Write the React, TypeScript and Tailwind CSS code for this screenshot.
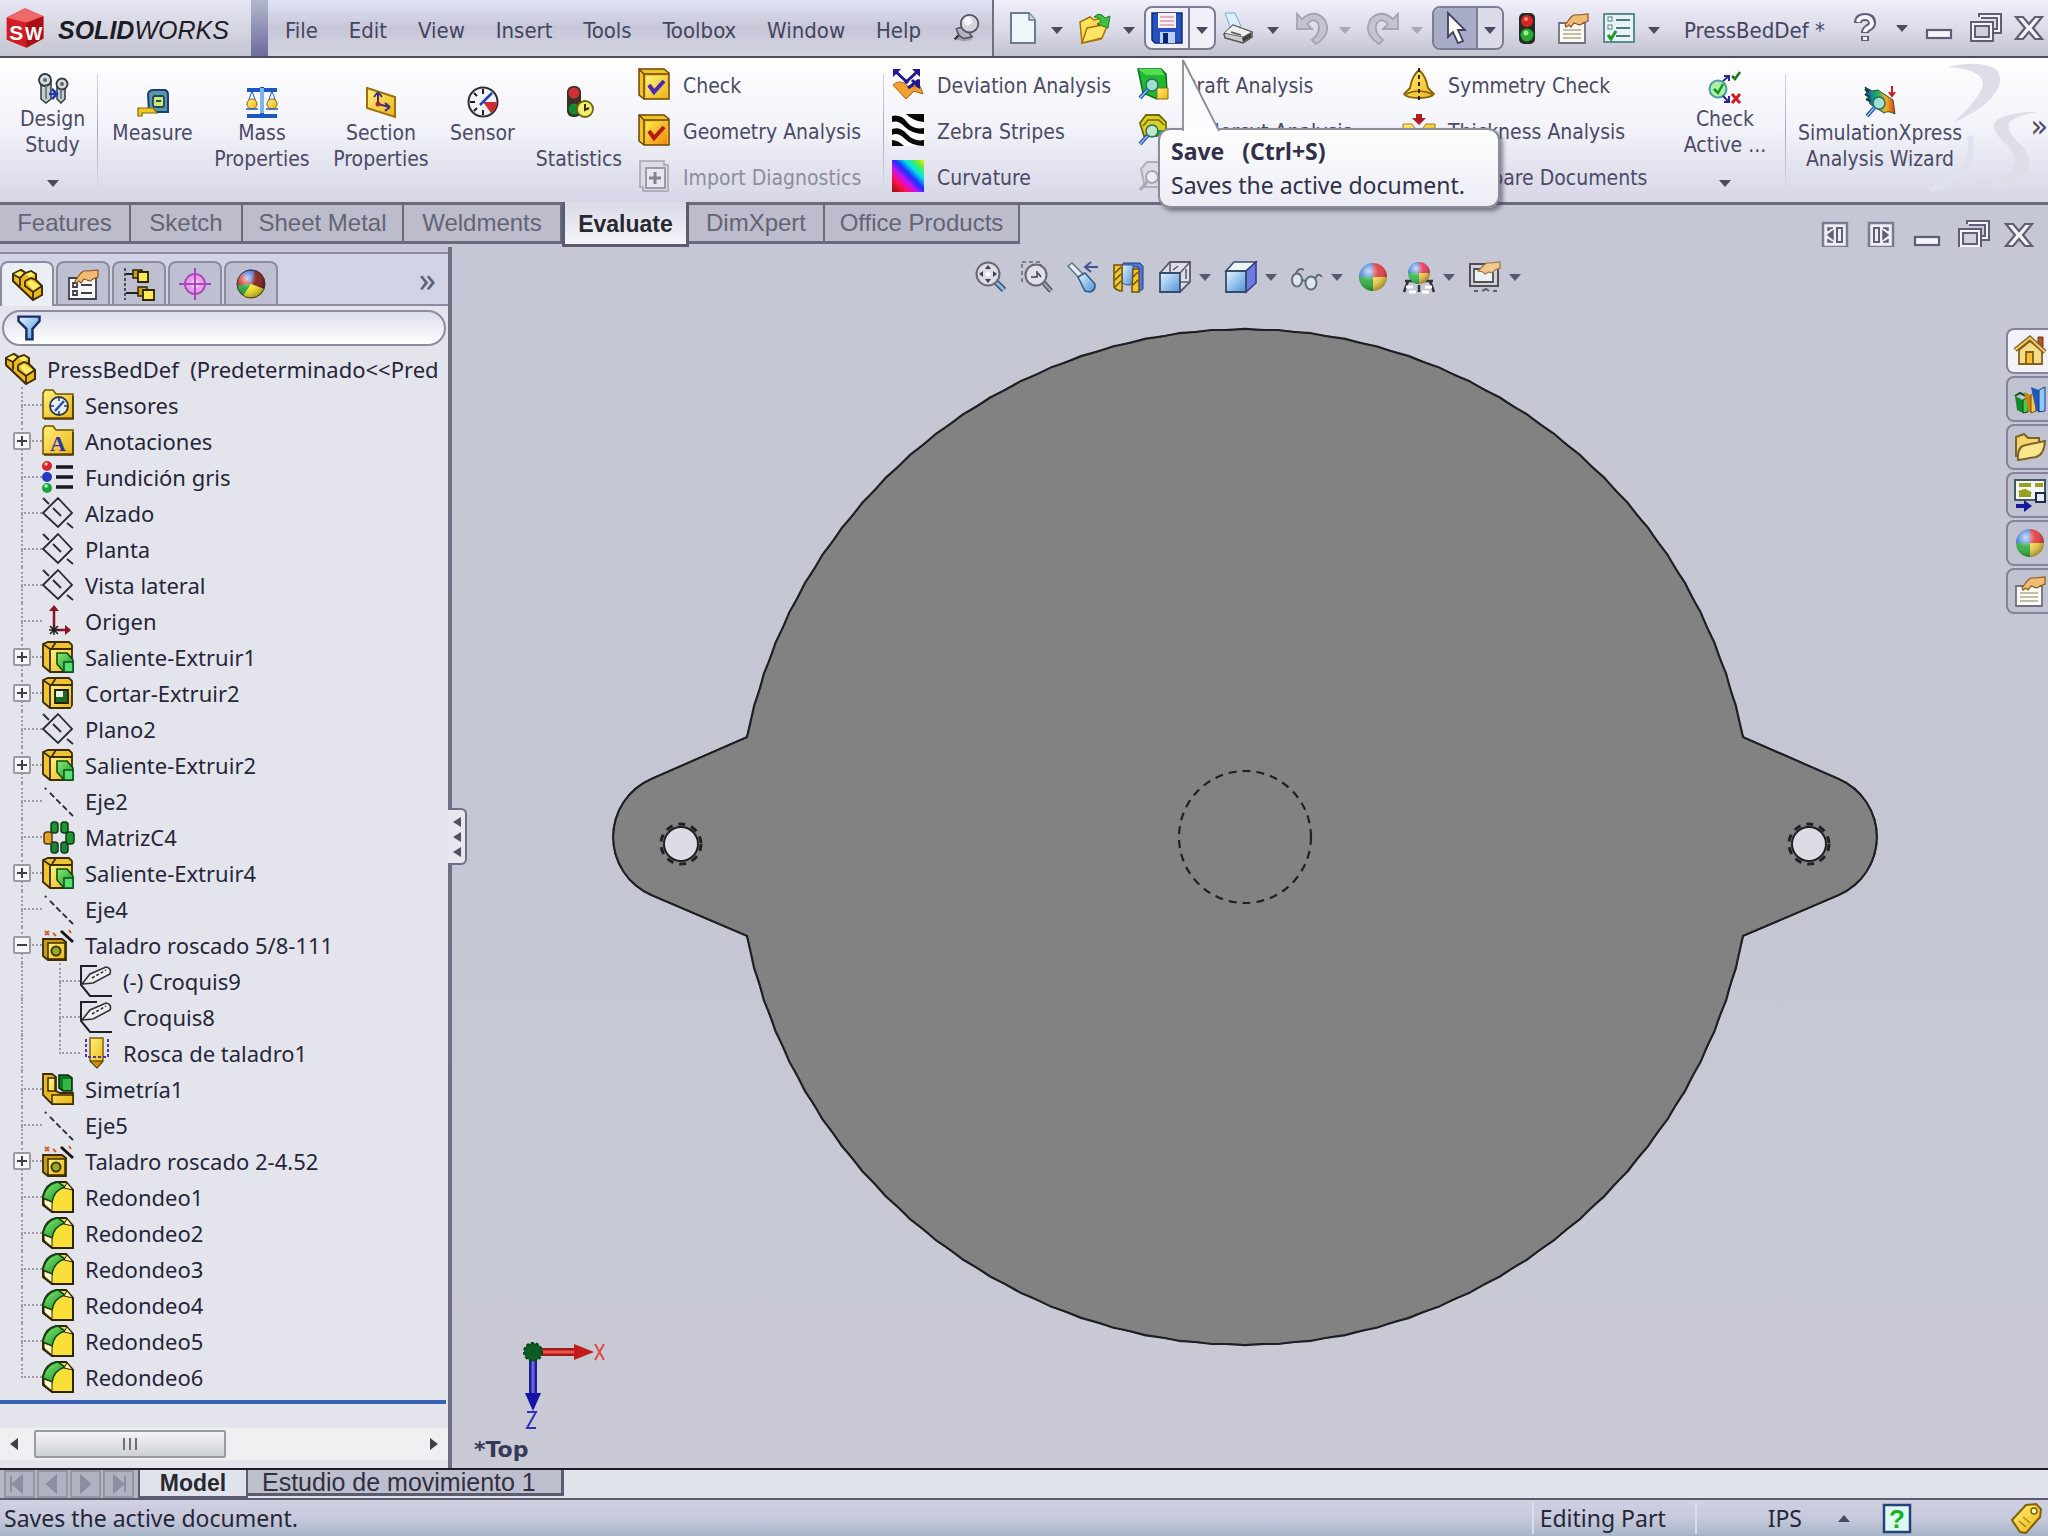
import type { ReactNode } from "react";
import clsx from "clsx";

function Defs() {
  return (
    <svg className="absolute size-0" aria-hidden="true">
      <defs>
        <linearGradient id="gold" x1="0" y1="0" x2="1" y2="1">
          <stop offset="0" stopColor="#fff27a" />
          <stop offset="1" stopColor="#ecb418" />
        </linearGradient>
        <linearGradient id="orange" x1="0" y1="0" x2="1" y2="1">
          <stop offset="0" stopColor="#ffe84a" />
          <stop offset="1" stopColor="#f08a10" />
        </linearGradient>
        <linearGradient id="sky" x1="0" y1="0" x2="1" y2="1">
          <stop offset="0" stopColor="#e6f4ff" />
          <stop offset="1" stopColor="#4c94dc" />
        </linearGradient>
        <linearGradient id="leaf" x1="0" y1="0" x2="1" y2="1">
          <stop offset="0" stopColor="#8aee70" />
          <stop offset="1" stopColor="#128a2a" />
        </linearGradient>
        <linearGradient id="rainbow" x1="1" y1="0" x2="0" y2="1">
          <stop offset="0" stopColor="#ffe600" />
          <stop offset="0.14" stopColor="#5cf03c" />
          <stop offset="0.3" stopColor="#00e6e6" />
          <stop offset="0.46" stopColor="#1a30ff" />
          <stop offset="0.62" stopColor="#d010f0" />
          <stop offset="0.78" stopColor="#ff1040" />
          <stop offset="1" stopColor="#8c1010" />
        </linearGradient>
        <linearGradient id="stress" x1="0" y1="0" x2="1" y2="0">
          <stop offset="0" stopColor="#1450c8" />
          <stop offset="0.4" stopColor="#18b060" />
          <stop offset="0.7" stopColor="#f0b020" />
          <stop offset="1" stopColor="#e04010" />
        </linearGradient>
        <radialGradient id="shine" cx="0.35" cy="0.3" r="0.7">
          <stop offset="0" stopColor="#fff" stopOpacity="0.75" />
          <stop offset="0.5" stopColor="#fff" stopOpacity="0.1" />
          <stop offset="1" stopColor="#000" stopOpacity="0.3" />
        </radialGradient>
      </defs>
    </svg>
  );
}

const ball = (
  <>
    <path d="M16 16V2A14 14 0 0 0 2 16Z" fill="#3c78d8" />
    <path d="M16 16V2A14 14 0 0 1 30 16Z" fill="#e03838" />
    <path d="M16 16H2A14 14 0 0 0 16 30Z" fill="#2cab3c" />
    <path d="M16 16H30A14 14 0 0 1 16 30Z" fill="#f2d24a" />
    <circle cx="16" cy="16" r="14" fill="url(#shine)" />
  </>
);

const hand = (
  <path
    d="M8 13 14 5Q17 2 21 3L31 2V9L26 11Q23 14 20 12L17 11 14 15 12 13 9 15Z"
    fill="#f0bc74"
    stroke="#8a5a20"
    strokeWidth="1.2"
  />
);

const lens = (
  <>
    <path d="M3 30 11 21" stroke="#204a9c" strokeWidth="4" />
    <path d="M3 30 11 21" stroke="#8cc8ff" strokeWidth="1.5" />
    <circle cx="15" cy="17" r="6" fill="#b8ecec" fillOpacity="0.8" stroke="#2a6a70" strokeWidth="1.5" />
  </>
);

const book = (
  <>
    <path d="M1 1H26L31 5V31H6L1 27Z" fill="#f0c428" stroke="#6e4200" strokeWidth="1.5" />
    <path d="M1 1 6 6H31M6 6V31" stroke="#6e4200" strokeWidth="1.5" fill="none" />
  </>
);

const block = (
  <>
    <path d="M1 3 6 1H27L30 4V28L28 31H8L1 25Z" fill="#f0c430" stroke="#3c2c00" strokeWidth="1.8" />
    <rect x="9" y="9" width="20" height="21" fill="url(#gold)" />
    <path d="M8 8H30M8 8V31M8 8 1 3M14 1 10 7" stroke="#3c2c00" strokeWidth="1.8" fill="none" />
  </>
);

const folder = (
  <>
    <path d="M1 4V29H31V5H14L11 1H3Z" fill="url(#gold)" stroke="#6e5200" strokeWidth="1.5" />
    <path d="M2 30H31V7" stroke="#4a3400" strokeWidth="1.5" fill="none" />
  </>
);

const restore = (
  <>
    <path d="M12 5V4H30V19H24" fill="none" stroke="#5e5e74" strokeWidth="6" />
    <path d="M12 5V4H30V19H24" fill="none" stroke="#f4f4fa" strokeWidth="2" />
    <rect x="4" y="12" width="18" height="15" fill="#d0d0dc" stroke="#5e5e74" strokeWidth="6" />
    <rect x="4" y="12" width="18" height="15" fill="none" stroke="#f4f4fa" strokeWidth="2" />
  </>
);

const icons: Record<string, ReactNode> = {
  logo: (
    <>
      <path d="M2 8 16 1 30 7V24L17 31 2 25Z" fill="#d01c22" />
      <path d="M2 8 16 1 30 7 17 12Z" fill="#f0686a" />
      <path d="M17 12V31L30 24V7Z" fill="#a81018" />
      <text x="4" y="25" fontSize="16" fontWeight="700" fontFamily="Liberation Sans" fill="#fff">S</text>
      <text x="16" y="25" fontSize="14" fontWeight="700" fontFamily="Liberation Sans" fill="#fff">W</text>
    </>
  ),
  pin: (
    <>
      <ellipse cx="14" cy="28" rx="9" ry="3" fill="#a0a0ac" />
      <path d="M3 29 12 20" stroke="#303040" strokeWidth="2.5" />
      <path d="M5 17Q14 12 23 26L14 28Q7 26 5 17Z" fill="#b4b4c0" stroke="#50505e" strokeWidth="1.8" />
      <circle cx="20" cy="11" r="10" fill="#d4d4de" stroke="#50505e" strokeWidth="2" />
      <circle cx="18" cy="8" r="5" fill="#f6f6fa" />
    </>
  ),
  new: (
    <>
      <path d="M4 1H22L28 8V31H4Z" fill="#eef6fa" stroke="#6c7c8c" strokeWidth="2" />
      <path d="M22 1V8H28" fill="#c8d4e0" stroke="#6c7c8c" strokeWidth="1.5" />
    </>
  ),
  open: (
    <>
      <path d="M1 10 11 5 15 8 24 6V14L27 15 22 27 3 31Z" fill="url(#gold)" stroke="#a87008" strokeWidth="1.5" />
      <path d="M3 31 8 16 29 12 23 26Z" fill="#ffe468" stroke="#a87008" strokeWidth="1.5" />
      <path d="M15 5Q21-1 26 6L31 4 29 16 18 12 22 10Q20 5 15 5Z" fill="#40c040" stroke="#1a7a24" />
    </>
  ),
  save: (
    <>
      <path d="M1 1H31V31H4L1 28Z" fill="#2450c0" stroke="#102878" strokeWidth="1.5" />
      <rect x="7" y="1" width="18" height="15" fill="#f4f2f8" />
      <path d="M9 5H23M9 9H23M9 13H23" stroke="#dc9ca8" strokeWidth="1.5" />
      <rect x="9" y="20" width="15" height="11" fill="#b8d0ec" />
      <rect x="12" y="21" width="5" height="10" fill="#0c2470" />
    </>
  ),
  print: (
    <>
      <path d="M2 1H12L18 14 8 17Z" fill="#dceefc" stroke="#88a4c0" />
      <path d="M1 22 10 13 29 20V25L20 31 2 26Z" fill="#c8ccca" stroke="#505450" strokeWidth="1.5" />
      <path d="M1 21 10 13 29 20 20 25Z" fill="#eef0ee" stroke="#606460" />
      <path d="M19 26 28 21V25L20 30Z" fill="#3c403c" />
      <path d="M8 20 18 23" stroke="#505450" strokeWidth="1.5" />
    </>
  ),
  undo: (
    <path d="M2 2V17H17L12 12Q18 5 23 11 27 20 17 28L21 32Q37 22 30 8 20-4 7 7Z" fill="#c4c4d0" stroke="#a4a4b2" strokeWidth="1.8" />
  ),
  redo: (
    <path d="M31 2V17H16L21 12Q15 5 10 11 6 20 16 28L12 32Q-4 22 3 8 13-4 26 7Z" fill="#c4c4d0" stroke="#a4a4b2" strokeWidth="1.8" />
  ),
  cursor: (
    <path d="M9 1V25L14 20 19 31 24 29 19 18H26Z" fill="#fff" stroke="#404058" strokeWidth="1.8" />
  ),
  traffic: (
    <>
      <rect x="8" y="1" width="16" height="31" rx="5" fill="#222c20" />
      <circle cx="16" cy="9" r="6" fill="#d82424" />
      <circle cx="16" cy="23" r="6.5" fill="#28a830" />
      <circle cx="15" cy="21" r="2.5" fill="#a0f088" />
      <circle cx="15" cy="7" r="2" fill="#ff8c80" />
    </>
  ),
  props: (
    <>
      <path d="M2 11H28V31H2Z" fill="#fbfaf4" stroke="#707080" strokeWidth="1.8" />
      <path d="M6 18H24M6 22H24M6 26H24" stroke="#b0a890" strokeWidth="1.5" />
      {hand}
    </>
  ),
  options: (
    <>
      <rect x="1" y="2" width="30" height="28" fill="#e8f4f4" stroke="#5c8c90" strokeWidth="2" />
      <path d="M13 8H27M13 16H27M13 24H27" stroke="#4c7c80" strokeWidth="2" />
      <rect x="5" y="5" width="4" height="4" fill="#fff" stroke="#4c7c80" />
      <rect x="5" y="13" width="4" height="4" fill="#fff" stroke="#4c7c80" />
      <path d="M5 23 8 27 13 19" stroke="#20982c" strokeWidth="3" fill="none" />
    </>
  ),
  help: (
    <>
      <path d="M9 11Q9 5 16 5T23 11Q23 14 19 16 16 18 16 21M16 24V29" fill="none" stroke="#5e5e74" strokeWidth="8" />
      <path d="M9 10Q10 5 16 5T23 11Q23 14 19 16 16 18 16 20M16 25V28" fill="none" stroke="#f4f4fa" strokeWidth="4" />
    </>
  ),
  min: <rect x="4" y="18" width="24" height="8" fill="#f4f4fa" stroke="#5e5e74" strokeWidth="2.2" />,
  restore,
  close: (
    <path d="M3 5H10L16 12 22 5H29L20 16 29 27H22L16 20 10 27H3L12 16Z" fill="#f4f4fa" stroke="#5e5e74" strokeWidth="2.2" />
  ),
  tileLeft: (
    <>
      <rect x="4" y="4" width="24" height="24" fill="#eeeef6" stroke="#7c7c90" strokeWidth="2.5" />
      <path d="M14 9H9V12M9 20V23H14M14 12V20L9 16Z" fill="#606074" stroke="#606074" strokeWidth="1.5" />
      <rect x="18" y="9" width="5" height="14" fill="none" stroke="#606074" strokeWidth="2" />
    </>
  ),
  tileRight: (
    <>
      <rect x="4" y="4" width="24" height="24" fill="#eeeef6" stroke="#7c7c90" strokeWidth="2.5" />
      <path d="M18 9H23V12M23 20V23H18M18 12V20L23 16Z" fill="#606074" stroke="#606074" strokeWidth="1.5" />
      <rect x="9" y="9" width="5" height="14" fill="none" stroke="#606074" strokeWidth="2" />
    </>
  ),
  study: (
    <>
      <path d="M4 9H14V27L9 31 4 27Z" fill="#c4ccd0" stroke="#303840" strokeWidth="1.5" />
      <circle cx="8" cy="8" r="6" fill="#d4dce0" stroke="#303840" strokeWidth="1.8" />
      <path d="M20 15H28V27L24 31 20 27Z" fill="#c4ccd0" stroke="#303840" strokeWidth="1.5" />
      <circle cx="25" cy="12" r="5.5" fill="#d4dce0" stroke="#303840" strokeWidth="1.8" />
      <path d="M9 12V27M24 16V27" stroke="#606870" strokeWidth="1.5" />
      <circle cx="8" cy="8" r="2" fill="#606870" />
      <circle cx="25" cy="12" r="2" fill="#606870" />
      <path d="M12 22H19M15 17 20 22 15 27" stroke="#2438b0" strokeWidth="2.5" fill="none" />
    </>
  ),
  measure: (
    <>
      <path d="M11 8Q12 4 16 4H28Q31 5 31 9V26H12Z" fill="#5c98a4" stroke="#1c3c80" strokeWidth="2" />
      <rect x="16" y="10" width="11" height="11" rx="2" fill="#d0e870" stroke="#1c4868" strokeWidth="1.8" />
      <path d="M19 15H24" stroke="#1c4868" strokeWidth="2" />
      <path d="M1 22H16L20 27H5V30H1Z" fill="#f0c820" stroke="#886808" strokeWidth="1.2" />
    </>
  ),
  mass: (
    <>
      <path d="M1 4H31M16 1V28" stroke="#1c58c0" strokeWidth="4" />
      <path d="M1 30H31" stroke="#1c58c0" strokeWidth="4" />
      <path d="M14 2H18V27H14Z" fill="#80b4f0" />
      <path d="M6 5 1 19M6 5 11 19M26 5 21 19M26 5 31 19" stroke="#1c58c0" />
      <circle cx="6" cy="18" r="5" fill="url(#gold)" stroke="#987010" />
      <circle cx="26" cy="18" r="5" fill="url(#gold)" stroke="#987010" />
      <path d="M0 23H12M20 23H32" stroke="#1c58c0" strokeWidth="1.5" />
    </>
  ),
  section: (
    <>
      <path d="M2 2 30 11V31L2 22Z" fill="url(#gold)" stroke="#a07008" strokeWidth="2" />
      <path d="M13 7V18L24 21M13 6 9 11M13 6 17 11M25 21 20 17M25 21 20 25" stroke="#40307c" strokeWidth="2" fill="none" />
      <circle cx="13" cy="18" r="2.5" fill="#b02040" />
    </>
  ),
  sensor: (
    <>
      <circle cx="16" cy="16" r="14.5" fill="#f2f4f8" stroke="#303034" strokeWidth="2" />
      <path d="M16 16 30 16Q30 23 24 27Z" fill="#d02c34" />
      <path d="M16 3V8M3 16H8M7 7 10 10M7 25 10 22M16 29V24" stroke="#202024" strokeWidth="2" />
      <path d="M13 19 25 7" stroke="#2040c0" strokeWidth="2.5" />
    </>
  ),
  stats: (
    <>
      <rect x="4" y="0" width="14" height="31" rx="6" fill="#3a3024" />
      <circle cx="11" cy="7" r="5.5" fill="#cc3030" />
      <circle cx="11" cy="23" r="5.5" fill="#188830" />
      <circle cx="22" cy="23" r="8" fill="#f6ee70" stroke="#6c6410" strokeWidth="1.8" />
      <path d="M22 18V24L26 22" stroke="#303010" strokeWidth="2" fill="none" />
    </>
  ),
  check: (
    <>
      {book}
      <rect x="8" y="8" width="21" height="22" fill="url(#gold)" />
      <path d="M11 17 16 24 26 13" stroke="#4a28b4" strokeWidth="4" fill="none" />
    </>
  ),
  geometry: (
    <>
      {book}
      <rect x="8" y="8" width="21" height="22" fill="url(#orange)" />
      <path d="M11 17 16 24 26 13" stroke="#b01c10" strokeWidth="4" fill="none" />
    </>
  ),
  import: (
    <>
      <path d="M2 1H26V5H30V31H5V27H2Z" fill="#dcdce6" stroke="#a4a4b0" strokeWidth="1.5" />
      <rect x="8" y="8" width="19" height="20" fill="#e8e8f0" stroke="#9494a0" strokeWidth="1.8" />
      <path d="M17 12V24M11 18H23" stroke="#84848f" strokeWidth="3" />
    </>
  ),
  deviation: (
    <>
      <path d="M1 17Q6 12 12 15L17 19 28 18 31 26 22 23 14 31Z" fill="#f0a030" stroke="#b06010" />
      <path d="M3 3 16 15M26 3 13 15M20 12 27 19M27 12 16 20" stroke="#201890" strokeWidth="3" />
      <path d="M1 1H9L1 9ZM28 1H20L28 9ZM28 11V21L21 16Z" fill="#201890" />
    </>
  ),
  zebra: (
    <>
      <rect width="32" height="32" fill="#fff" />
      <path d="M0 2Q9 0 15 8T32 14V20Q20 20 13 13T0 8ZM0 15Q8 12 15 20T32 26V32Q20 32 13 25T0 21ZM14 0Q21 7 32 8V0ZM0 26Q6 26 12 32H0Z" fill="#080808" />
    </>
  ),
  curvature: <rect width="32" height="32" fill="url(#rainbow)" />,
  draft: (
    <>
      <path d="M1 1H24L29 6 30 24 20 31 6 25Z" fill="#20b830" stroke="#08701c" strokeWidth="1.5" />
      <path d="M1 1 9 7H27L24 1Z" fill="#50e050" />
      <path d="M20 20H31V31H20Z" fill="url(#gold)" stroke="#907008" />
      {lens}
    </>
  ),
  undercut: (
    <>
      <path d="M3 9 9 1H22L29 8V16L20 22H7Z" fill="#dcd020" stroke="#706808" strokeWidth="1.8" />
      <path d="M6 12 11 6H22L27 11" stroke="#706808" strokeWidth="1.5" fill="none" />
      <path d="M18 16H31V19L20 22Z" fill="#28a030" />
      {lens}
    </>
  ),
  parting: (
    <>
      <path d="M4 9 10 2H22L28 9V20L22 27H8Z" fill="#dcdce4" stroke="#b0b0bc" strokeWidth="2" />
      <path d="M3 30 11 21" stroke="#a8a8b4" strokeWidth="3" />
      <circle cx="15" cy="17" r="6" fill="#ececf2" stroke="#a8a8b4" strokeWidth="2" />
    </>
  ),
  symmetry: (
    <>
      <path d="M16 2Q23 8 25 20L31 26Q28 30 16 30T1 26L7 20Q9 8 16 2Z" fill="url(#gold)" stroke="#806008" strokeWidth="1.8" />
      <path d="M3 26Q16 20 29 26" stroke="#806008" strokeWidth="1.5" fill="none" />
      <path d="M16 0V32" stroke="#302404" strokeWidth="2" strokeDasharray="4 3" />
    </>
  ),
  thickness: (
    <>
      <path d="M0 10H9Q12 16 16 16T23 10H32V16H24Q20 21 16 21T8 16H0Z" fill="url(#gold)" stroke="#b07810" />
      <path d="M13 0H19V4H23L16 11 9 4H13ZM13 32H19V28H23L16 22 9 28H13Z" fill="#b01c24" />
    </>
  ),
  compare: (
    <>
      <path d="M2 2H15V22H2Z" fill="#fff" stroke="#606078" strokeWidth="1.5" />
      <path d="M16 10H30V30H16Z" fill="#fff" stroke="#606078" strokeWidth="1.5" />
    </>
  ),
  checkActive: (
    <>
      <circle cx="9" cy="17" r="8.5" fill="#b0f0a0" stroke="#4c9cac" strokeWidth="2" />
      <path d="M5 17 9 21 14 12" stroke="#109830" strokeWidth="2.5" fill="none" />
      <path d="M14 9 20 4M15 4H20V9M14 24 20 30M20 24V30H15" stroke="#282890" strokeWidth="2" fill="none" />
      <path d="M23 4 26 7 31 0" stroke="#187820" strokeWidth="2.5" fill="none" />
      <path d="M23 22 31 31M31 22 23 31" stroke="#d01c24" strokeWidth="3" />
    </>
  ),
  simulation: (
    <>
      <path d="M1 1 8 5 14 4 29 14 31 28Q24 24 20 27L6 18Z" fill="url(#stress)" stroke="#30502c" />
      <path d="M1 3 5 6M1 8 6 11M2 13 7 15" stroke="#104048" strokeWidth="2.5" />
      <path d="M28 0V9M25 6 28 10 31 6" stroke="#c02020" strokeWidth="2" fill="none" />
      {lens}
    </>
  ),
  zoomFit: (
    <>
      <path d="M21 21 29 29" stroke="#384c68" strokeWidth="6" />
      <path d="M21 21 29 29" stroke="#88b8e8" strokeWidth="3" />
      <circle cx="13" cy="13" r="11.5" fill="#dcdce4" stroke="#686874" strokeWidth="2" />
      <path d="M13 4 16 8H10ZM13 22 16 18H10ZM4 13 8 10V16ZM22 13 18 10V16Z" fill="#404050" />
      <circle cx="13" cy="13" r="2.5" fill="#fff" />
    </>
  ),
  zoomArea: (
    <>
      <path d="M1 1H20V20H1Z" fill="none" stroke="#686874" strokeWidth="1.5" strokeDasharray="4 3" />
      <path d="M23 22 30 30" stroke="#585864" strokeWidth="5" />
      <path d="M23 22 30 30" stroke="#a4a4b0" strokeWidth="2" />
      <circle cx="15" cy="14" r="10.5" fill="#e0e0e8" stroke="#686874" strokeWidth="2" />
      <path d="M10 16H16V10M17 12 20 16" stroke="#404050" strokeWidth="1.5" fill="none" />
    </>
  ),
  previous: (
    <>
      <path d="M1 5 5 2 17 14 13 18Z" fill="#e4eef4" stroke="#607888" strokeWidth="1.5" />
      <path d="M11 16 18 12 28 23Q29 29 23 31L18 30Z" fill="url(#sky)" stroke="#305880" strokeWidth="1.5" />
      <path d="M31 6H19M24 1 18 6 24 11" stroke="#405890" strokeWidth="2" fill="none" />
    </>
  ),
  sectionView: (
    <>
      <path d="M10 2H27L30 5V28L25 31V6H10Z" fill="#4878d8" stroke="#283c80" />
      <path d="M9 4H20V22Q16 26 9 22Z" fill="url(#sky)" stroke="#305890" />
      <path d="M1 4H9V30Q4 30 1 26ZM20 8H26V31H19V26Z" fill="#f0c830" stroke="#705008" strokeWidth="1.5" />
      <path d="M2 12 8 6M2 19 8 13M2 26 8 20M20 16 25 11M20 24 25 19" stroke="#705008" strokeWidth="1.5" />
    </>
  ),
  orient: (
    <>
      <path d="M1 12 11 1H31V21L21 31" fill="#e0dce8" stroke="#585868" strokeWidth="1.8" />
      <path d="M11 1V12M21 12 31 1M31 21H21M14 9 19 5M27 8V18" stroke="#585868" strokeWidth="1.5" />
      <path d="M1 12H21V31H1Z" fill="url(#sky)" stroke="#384c68" strokeWidth="1.8" />
    </>
  ),
  display: (
    <>
      <path d="M1 10 9 1H31L21 10Z" fill="#eef6fc" stroke="#384c68" strokeWidth="1.5" />
      <path d="M21 10 31 1V22L21 31Z" fill="#6c7cdc" stroke="#30389c" strokeWidth="1.5" />
      <path d="M1 10H21V31H1Z" fill="url(#sky)" stroke="#384c68" strokeWidth="1.8" />
    </>
  ),
  glasses: (
    <>
      <path d="M4 17Q6 5 13 9M23 20Q27 10 31 16" stroke="#606c78" strokeWidth="2" fill="none" />
      <ellipse cx="6" cy="19" rx="5" ry="6.5" fill="#dce8ec" stroke="#606c78" strokeWidth="2" />
      <ellipse cx="20" cy="22" rx="5.5" ry="6.5" fill="#dce8ec" stroke="#606c78" strokeWidth="2" />
      <path d="M11 19 15 20" stroke="#606c78" strokeWidth="2" />
    </>
  ),
  ball,
  scene: (
    <>
      <path d="M2 20H30M5 20 1 31M27 20 31 31M16 24V31" stroke="#303038" strokeWidth="2.5" />
      <path d="M3 26H10M22 26H29M6 31H13M19 31H26" stroke="#fff" strokeWidth="3" />
      <path d="M16 12V1A11 11 0 0 0 5 12Z" fill="#3c78d8" />
      <path d="M16 12V1A11 11 0 0 1 27 12Z" fill="#e03858" />
      <path d="M16 12H5A11 11 0 0 0 16 23Z" fill="#2cbb4c" />
      <path d="M16 12H27A11 11 0 0 1 16 23Z" fill="#f2c24a" />
      <circle cx="16" cy="12" r="11" fill="url(#shine)" />
    </>
  ),
  monitor: (
    <>
      <path d="M1 3H29V25H1Z" fill="#d4d4d8" stroke="#505058" strokeWidth="2" />
      <path d="M5 8H24V21H5Z" fill="#eef2f2" stroke="#505058" strokeWidth="1.8" />
      <path d="M5 30H9M13 30 17 28 20 30M24 30H28" stroke="#606068" strokeWidth="2" fill="none" />
      <path d="M9 10 15 4Q18 1 22 2L31 1V7L26 9Q23 13 20 11L16 13 14 11Z" fill="#f0c890" stroke="#9a7440" strokeWidth="1.2" />
    </>
  ),
  home: (
    <>
      <path d="M24 2H29V12H24Z" fill="#b05828" stroke="#703010" />
      <path d="M5 15 16 6 28 16V29H5Z" fill="#f6dc88" stroke="#806020" strokeWidth="1.8" />
      <path d="M1 15 16 3 31 17" stroke="#806020" strokeWidth="4.5" fill="none" />
      <path d="M1 15 16 3 31 17" stroke="#f4cc60" strokeWidth="2" fill="none" />
      <path d="M12 17H19V29H12Z" fill="#f8c030" stroke="#806020" strokeWidth="1.8" />
    </>
  ),
  books: (
    <>
      <path d="M1 13 9 17V30L3 27Z" fill="#108a28" />
      <path d="M9 17 14 14V29L9 30Z" fill="#40d050" stroke="#084c14" />
      <path d="M1 13 6 10 14 14" stroke="#0c5818" strokeWidth="2" fill="none" />
      <path d="M10 9 17 12V30L14 28Z" fill="#c88410" />
      <path d="M17 12 22 9V28L17 30Z" fill="#f6cc40" stroke="#785008" />
      <path d="M17 4 25 7V29L22 28Z" fill="#2458c0" />
      <path d="M25 7 31 4V28L25 29Z" fill="#90c8f8" stroke="#183c88" />
    </>
  ),
  openFolder: (
    <>
      <path d="M2 26V6L10 3 14 7H25V13" fill="#f4d46c" stroke="#7c6428" strokeWidth="2" />
      <path d="M4 29Q3 15 12 14L31 10Q30 24 22 26L5 29Z" fill="#fae68c" stroke="#7c6428" strokeWidth="2" />
    </>
  ),
  palette: (
    <>
      <rect x="1" y="1" width="30" height="20" fill="#f4f8f8" stroke="#405868" strokeWidth="2" />
      <path d="M5 6H17M21 6H29M5 14 11 12 17 15M5 16H17" stroke="#98a020" strokeWidth="4" />
      <path d="M22 14H31V23H22Z" fill="#e8ecf4" stroke="#202850" strokeWidth="2" />
      <path d="M2 27H12" stroke="#1818a0" strokeWidth="4" />
      <path d="M10 21 18 27 10 33Z" fill="#1818a0" />
    </>
  ),
  part: (
    <>
      <path d="M2 5 10 1 15 4 20 2 25 5V11L31 17V26L22 31 2 12Z" fill="#ecb81c" stroke="#3c2c00" strokeWidth="2" />
      <path d="M3 5 9 2 14 5 9 8ZM15 5 20 3 24 6 19 9ZM16 14 20 11 29 17 22 21Z" fill="#fff06c" />
      <path d="M3 6 9 9 14 4M9 9V17M14 12 20 9 25 11M14 12V17L22 23 31 17M22 23V30" stroke="#3c2c00" strokeWidth="1.8" fill="none" />
    </>
  ),
  manager: (
    <>
      <path d="M2 10H29V31H2Z" fill="#f8f8f8" stroke="#404048" strokeWidth="1.8" />
      <path d="M6 15H10V19H6ZM6 23H10V27H6ZM14 17H25M14 25H25" stroke="#404048" strokeWidth="1.8" fill="none" />
      {hand}
    </>
  ),
  config: (
    <>
      <path d="M2 0V32" stroke="#404048" strokeWidth="1.8" strokeDasharray="3 2" />
      <path d="M3 6H14M3 25H18" stroke="#202020" strokeWidth="2" />
      <path d="M10 2H19V10H10Z" fill="#c8a018" stroke="#302400" strokeWidth="1.5" />
      <path d="M15 4H25V14H15Z" fill="#ffec50" stroke="#302400" strokeWidth="1.8" />
      <path d="M15 19H24V28H15Z" fill="#c8a018" stroke="#302400" strokeWidth="1.5" />
      <path d="M20 22H31V32H20Z" fill="#ffec50" stroke="#302400" strokeWidth="1.8" />
    </>
  ),
  target: (
    <>
      <circle cx="16" cy="16" r="10" fill="#e8a0e8" stroke="#b048c0" strokeWidth="2" />
      <circle cx="16" cy="16" r="4" fill="#f4d0f8" />
      <path d="M16 0V32M0 16H32" stroke="#a848c0" strokeWidth="2" />
    </>
  ),
  appearance: (
    <>
      <path d="M16 16 2 18A14 14 0 0 1 12 3Z" fill="#c82020" />
      <path d="M16 16 7 5A14 14 0 0 1 22 3Z" fill="#3060e0" />
      <path d="M16 16 20 2A14 14 0 0 1 29 21Z" fill="#7c1810" />
      <path d="M16 16 2 17A14 14 0 0 0 9 28Z" fill="#20a030" />
      <path d="M16 16 8 28A14 14 0 0 0 29 21Z" fill="#f4e020" />
      <circle cx="16" cy="16" r="14" fill="url(#shine)" stroke="#40302c" />
    </>
  ),
  filter: (
    <path d="M4 3H28V8L20 17V29H13V17L4 8Z" fill="url(#sky)" stroke="#182c68" strokeWidth="2.8" />
  ),
  sensors: (
    <>
      {folder}
      <circle cx="17" cy="17" r="9" fill="#e8f0fa" stroke="#303848" strokeWidth="1.8" />
      <path d="M13 22 22 12" stroke="#2050c0" strokeWidth="2.5" />
      <path d="M17 9V12M9 17H12M17 25V22M25 17H22" stroke="#303848" strokeWidth="1.5" />
    </>
  ),
  annotations: (
    <>
      {folder}
      <text x="8" y="26" fontSize="22" fontWeight="700" fontFamily="Liberation Serif" fill="#3030b0">A</text>
    </>
  ),
  material: (
    <>
      <circle cx="5" cy="5" r="5" fill="#d42430" />
      <circle cx="5" cy="16" r="5" fill="#2438c0" />
      <circle cx="5" cy="27" r="5" fill="#20a040" />
      <circle cx="4" cy="3" r="1.8" fill="#ffb0a8" />
      <circle cx="4" cy="25" r="1.8" fill="#b0ffb8" />
      <path d="M14 6H31M14 16H31M14 26H31" stroke="#181820" strokeWidth="3.5" />
    </>
  ),
  plane: (
    <path d="M16 1 30 16 16 30 1 16ZM1 1 7 7M11 11 19 19M25 26 31 31" fill="none" stroke="#282830" strokeWidth="1.8" />
  ),
  origin: (
    <>
      <path d="M12 4V25H28" stroke="#8c1424" strokeWidth="2.5" fill="none" />
      <path d="M7 6 12 0 17 6ZM23 20V30L29 25Z" fill="#8c1424" />
      <path d="M7 25H17M12 20V30M8 21 16 29M16 21 8 29" stroke="#202020" strokeWidth="1.6" />
    </>
  ),
  boss: (
    <>
      {block}
      <path d="M15 12H25L31 19V31H22L15 23Z" fill="url(#leaf)" stroke="#0c4c18" strokeWidth="1.6" />
      <path d="M22 21H31V31H22Z" fill="#58e070" stroke="#0c4c18" strokeWidth="1.5" />
    </>
  ),
  cut: (
    <>
      {block}
      <path d="M13 13H26V26H13Z" fill="#1c6c28" stroke="#202000" strokeWidth="1.8" />
      <path d="M14 14H21V20H14Z" fill="#e4f4e0" />
    </>
  ),
  axis: <path d="M3 3 31 31" stroke="#282830" strokeWidth="1.8" strokeDasharray="2 5 6 3 6 3 6 3 6 3" />,
  pattern: (
    <>
      <rect x="9" y="1" width="7" height="11" rx="3" fill="#1c9830" stroke="#0c3c14" strokeWidth="1.5" />
      <rect x="19" y="1" width="7" height="11" rx="3" fill="#1c9830" stroke="#0c3c14" strokeWidth="1.5" />
      <rect x="9" y="21" width="7" height="11" rx="3" fill="#20803c" stroke="#0c3c14" strokeWidth="1.5" />
      <rect x="19" y="21" width="7" height="11" rx="3" fill="#20803c" stroke="#0c3c14" strokeWidth="1.5" />
      <rect x="2" y="11" width="8" height="12" rx="3" fill="#e8a030" stroke="#583808" strokeWidth="1.5" />
      <rect x="24" y="11" width="8" height="12" rx="3" fill="#1c9830" stroke="#0c3c14" strokeWidth="1.5" />
    </>
  ),
  wizard: (
    <>
      <path d="M1 10H20L24 13V31H6L1 27Z" fill="#c89c14" stroke="#3c2c00" strokeWidth="1.8" />
      <rect x="6" y="14" width="17" height="16" fill="url(#gold)" stroke="#3c2c00" strokeWidth="1.5" />
      <circle cx="14" cy="22" r="4.5" fill="#98a828" stroke="#3c3c00" strokeWidth="2" />
      <path d="M19 2 31 13" stroke="#181410" strokeWidth="3" />
      <path d="M3 2 7 6M7 2 3 6M11 4 14 7M27 1 29 4" stroke="#d86020" strokeWidth="2" />
    </>
  ),
  sketch: (
    <>
      <path d="M17 1H1V20L10 31H32" stroke="#202028" strokeWidth="2" fill="none" />
      <path d="M2 19 10 9 26 2Q32 3 30 9L13 18Z" fill="#f0f0f2" stroke="#303038" strokeWidth="1.6" />
      <path d="M12 13 26 5" stroke="#303038" strokeWidth="1.5" strokeDasharray="3 2" />
    </>
  ),
  thread: (
    <>
      <path d="M10 1H23V24L17 31 10 24Z" fill="url(#gold)" stroke="#806008" strokeWidth="1.5" />
      <path d="M6 2V20H28V2" stroke="#5038a0" strokeWidth="2" strokeDasharray="3 2" fill="none" />
      <path d="M10 24H23L17 31Z" fill="#c89010" stroke="#403000" />
    </>
  ),
  mirror: (
    <>
      <path d="M1 1H10L14 4V18L18 20H31V31H10L1 22Z" fill="#e8b820" stroke="#3c2c00" strokeWidth="1.8" />
      <path d="M6 5H13V18H6ZM10 22H31V31H10Z" fill="url(#gold)" stroke="#3c2c00" strokeWidth="1.5" />
      <path d="M17 2H26L30 5V18H21L17 15Z" fill="#0c7820" stroke="#082c10" strokeWidth="1.6" />
      <path d="M21 6H29V17H21Z" fill="#30b840" />
    </>
  ),
  fillet: (
    <>
      <path d="M1 15Q4 3 14 1H24L31 9V31H10L1 24Z" fill="#f8e038" stroke="#302400" strokeWidth="2" />
      <path d="M1 17Q4 3 16 1L23 6Q12 9 10 21Z" fill="url(#leaf)" stroke="#0c4c18" strokeWidth="1.6" />
      <path d="M2 18 10 21V30L2 23Z" fill="#fffbd0" stroke="#302400" />
      <path d="M22 7 25 2 31 9Z" fill="#fff6b0" stroke="#302400" />
    </>
  ),
  quickHelp: (
    <>
      <rect x="3" y="3" width="26" height="27" fill="#dcfaf0" stroke="#28407c" strokeWidth="2.5" />
      <text x="8" y="26" fontSize="26" fontWeight="700" fontFamily="Liberation Sans" fill="#18b028">?</text>
    </>
  ),
  tag: (
    <>
      <path d="M2 18 16 3 26 2 31 7 30 15 16 31 10 30Z" fill="url(#gold)" stroke="#806008" strokeWidth="2" />
      <circle cx="24" cy="9" r="3" fill="#fff8c0" stroke="#806008" strokeWidth="1.5" />
      <path d="M9 19 16 25M13 15 20 21" stroke="#b08410" strokeWidth="1.5" />
    </>
  ),
};

function Icon({ name, className = "size-8" }: { name: string; className?: string }) {
  return (
    <svg viewBox="0 0 32 32" fill="none" className={clsx("block shrink-0 overflow-visible", className)} aria-hidden="true">
      {icons[name]}
    </svg>
  );
}

function Caret({ className = "text-[#4a4a60]" }: { className?: string }) {
  return (
    <svg viewBox="0 0 12 7" className={clsx("block h-[7px] w-3", className)} aria-hidden="true">
      <path d="M0 0H12L6 7Z" fill="currentColor" />
    </svg>
  );
}

function SplitButton({ icon, label, boxed, pressed, disabled }: any) {
  return (
    <div
      className={clsx(
        "flex h-11 w-[72px] shrink-0 overflow-hidden rounded-lg border-2",
        boxed ? "border-[#7c7c94]" : "border-transparent",
        boxed && !pressed && "bg-[#f0f0f8]"
      )}
    >
      <button
        aria-label={label}
        disabled={disabled}
        className={clsx("flex flex-1 items-center justify-center", pressed && "bg-[#a8acc8]")}
      >
        <Icon name={icon} />
      </button>
      <button
        aria-label={`${label} options`}
        disabled={disabled}
        className={clsx("flex w-[26px] items-center justify-center pt-1", boxed && "border-l-2 border-[#7c7c94]", pressed && "bg-[#dcdce8]")}
      >
        <Caret className={disabled ? "text-[#a8a8b8]" : "text-[#4a4a60]"} />
      </button>
    </div>
  );
}

function IconButton({ icon, label, className = "w-[46px]" }: { icon: string; label: string; className?: string }) {
  return (
    <button aria-label={label} className={clsx("flex shrink-0 items-center justify-center", className)}>
      <Icon name={icon} />
    </button>
  );
}

const menus = ["File", "Edit", "View", "Insert", "Tools", "Toolbox", "Window", "Help"];

function TitleBar() {
  return (
    <header className="flex h-[58px] shrink-0 border-b-2 border-[#4c4c5c] text-[22px] text-[#44445e]">
      <div className="flex w-[251px] shrink-0 items-center gap-3 bg-linear-to-b from-[#e6e6f4] to-[#c6c6d2] pl-1">
        <Icon name="logo" className="size-[42px]" />
        <span className="pt-1.5 font-['Liberation_Sans',sans-serif] text-[25px] text-[#1c1c24] italic">
          <b>SOLID</b>WORKS
        </span>
      </div>
      <div className="w-[17px] shrink-0 bg-linear-to-b from-[#b4b8cc] to-[#6c6ca0]" />
      <nav className="flex w-[726px] shrink-0 items-center justify-between border-r-2 border-[#707080] bg-linear-to-b from-[#e2e4f6] via-[#c6c6d8] to-[#d4d4e0] pr-3 pl-[17px]">
        {menus.map((m) => (
          <button key={m} className="pt-1">
            {m}
          </button>
        ))}
        <button aria-label="Pin menu">
          <Icon name="pin" className="size-7" />
        </button>
      </nav>
      <div className="flex min-w-0 flex-1 items-center bg-linear-to-b from-[#f0f0fa] via-[#dcdcea] to-[#c2c2d0] pl-[6px]">
        <SplitButton icon="new" label="New" />
        <SplitButton icon="open" label="Open" />
        <SplitButton icon="save" label="Save" boxed />
        <SplitButton icon="print" label="Print" />
        <SplitButton icon="undo" label="Undo" disabled />
        <SplitButton icon="redo" label="Redo" disabled />
        <SplitButton icon="cursor" label="Select" boxed pressed />
        <IconButton icon="traffic" label="Rebuild" />
        <IconButton icon="props" label="File Properties" />
        <IconButton icon="options" label="Options" />
        <button aria-label="More options" className="flex h-8 w-6 items-center justify-center pt-1">
          <Caret />
        </button>
        <span className="ml-[18px] pt-1 whitespace-nowrap">PressBedDef *</span>
        <div className="ml-auto flex items-center">
          <IconButton icon="help" label="Help" className="w-[42px]" />
          <button aria-label="Help options" className="flex h-8 w-8 items-center justify-center">
            <Caret />
          </button>
          <IconButton icon="min" label="Minimize" className="w-[42px]" />
          <IconButton icon="restore" label="Restore" className="w-[50px]" />
          <IconButton icon="close" label="Close" className="w-[38px]" />
        </div>
      </div>
    </header>
  );
}

function BigButton({ icon, lines, className, menu }: { icon: string; lines: string[]; className?: string; menu?: boolean }) {
  return (
    <button className={clsx("flex shrink-0 flex-col items-center", menu ? "pt-[14px]" : "pt-7", className)}>
      <Icon name={icon} />
      {lines.map((l, i) => (
        <span key={i} className="h-[26px] leading-[30px] whitespace-nowrap">
          {l}
        </span>
      ))}
      {menu && (
        <span className="mt-6">
          <Caret />
        </span>
      )}
    </button>
  );
}

function ToolColumn({ items, className }: { items: [string, string, boolean?][]; className?: string }) {
  return (
    <div className={clsx("flex shrink-0 flex-col pt-[3px]", className)}>
      {items.map(([icon, label, off]) => (
        <button
          key={icon}
          disabled={off}
          className={clsx("flex h-[46px] items-center gap-[13px] whitespace-nowrap", off && "text-[#8c8c9c]")}
        >
          <Icon name={icon} />
          <span className="pt-1.5">{label}</span>
        </button>
      ))}
    </div>
  );
}

function Divider({ className }: { className?: string }) {
  return <div className={clsx("my-4 w-px shrink-0 bg-linear-to-b from-[#d8d8e4] via-[#a8a8b8] to-[#d8d8e4]", className)} />;
}

function Ribbon() {
  return (
    <section className="relative flex h-[147px] shrink-0 border-b-3 border-[#6a6a7e] bg-linear-to-b from-white via-[#f2f2fa] to-[#d6d6e6] text-[21px] text-[#4a4a66]">
      <svg viewBox="0 0 120 130" className="absolute top-1 right-0 h-[130px] w-[120px]" fill="none" aria-hidden="true">
        <path d="M20 5Q50-2 66 6 76 14 70 26 60 46 26 60 48 40 54 26 60 8 20 5Z" fill="#dedee8" />
        <path d="M112 50Q72 50 66 62 64 70 80 84 92 98 82 110 66 122 42 118 80 134 98 110 106 96 92 82 74 66 84 58 94 52 112 50Z" fill="#dedee8" />
        <path d="M42 74Q50 110 2 128" stroke="#dfe3f0" strokeWidth="6" />
      </svg>
      <BigButton icon="study" lines={["Design", "Study"]} menu className="w-[97px] pl-2" />
      <Divider />
      <BigButton icon="measure" lines={["Measure"]} className="w-[109px]" />
      <BigButton icon="mass" lines={["Mass", "Properties"]} className="w-[110px]" />
      <BigButton icon="section" lines={["Section", "Properties"]} className="w-[128px]" />
      <BigButton icon="sensor" lines={["Sensor"]} className="w-[75px]" />
      <BigButton icon="stats" lines={["", "Statistics"]} className="w-[118px]" />
      <ToolColumn
        className="w-[245px]"
        items={[
          ["check", "Check"],
          ["geometry", "Geometry Analysis"],
          ["import", "Import Diagnostics", true],
        ]}
      />
      <Divider />
      <ToolColumn
        className="w-[253px] pl-2"
        items={[
          ["deviation", "Deviation Analysis"],
          ["zebra", "Zebra Stripes"],
          ["curvature", "Curvature"],
        ]}
      />
      <ToolColumn
        className="w-[266px]"
        items={[
          ["draft", "Draft Analysis"],
          ["undercut", "Undercut Analysis"],
          ["parting", "", true],
        ]}
      />
      <ToolColumn
        className="w-[262px]"
        items={[
          ["symmetry", "Symmetry Check"],
          ["thickness", "Thickness Analysis"],
          ["compare", "Compare Documents"],
        ]}
      />
      <BigButton icon="checkActive" lines={["Check", "Active ..."]} menu className="w-[120px]" />
      <Divider />
      <BigButton icon="simulation" lines={["SimulationXpress", "Analysis Wizard"]} className="w-[188px]" />
      <button aria-label="More tools" className="ml-auto pb-2 text-[32px]">
        »
      </button>
      <SaveTooltip />
    </section>
  );
}

function SaveTooltip() {
  return (
    <div
      role="tooltip"
      className="absolute top-[70px] left-[1158px] z-10 h-20 w-[342px] rounded-xl border-2 border-[#8c8c98] bg-linear-to-b from-white to-[#ececf6] pt-1 pl-[11px] font-['Noto_Sans',sans-serif] text-[23px] whitespace-nowrap text-[#30304a] shadow-[3px_3px_4px_rgba(60,60,80,0.6)]"
    >
      <svg viewBox="0 0 40 74" className="absolute -top-[72px] left-[21px] h-[74px] w-10" aria-hidden="true">
        <path d="M2 74V2L38 72V74Z" fill="#fcfcff" />
        <path d="M2 73V2L38 73" fill="none" stroke="#8c8c98" strokeWidth="1.8" />
      </svg>
      <p className="leading-[34px] font-bold whitespace-pre">Save   (Ctrl+S)</p>
      <p className="leading-[34px]">Saves the active document.</p>
    </div>
  );
}

const tabs: [string, string][] = [
  ["Features", "w-[131px]"],
  ["Sketch", "w-[112px]"],
  ["Sheet Metal", "w-[161px]"],
  ["Weldments", "w-[158px]"],
  ["Evaluate", "w-[127px]"],
  ["DimXpert", "w-[136px]"],
  ["Office Products", "w-[195px]"],
];

function CommandTabs() {
  return (
    <div className="flex h-[42px] shrink-0 items-start bg-[#c6c7d4] font-['Liberation_Sans',sans-serif]">
      {tabs.map(([label, width]) =>
        label === "Evaluate" ? (
          <button
            key={label}
            className={clsx("z-1 -mt-[3px] h-[45px] border-x-3 border-b-3 border-[#5c5c70] bg-linear-to-b from-[#dadae8] to-[#f4f4fa] pt-0.5 text-[23px] font-bold text-[#282830]", width)}
          >
            {label}
          </button>
        ) : (
          <button key={label} className={clsx("h-[39px] border-r-2 border-b-3 border-[#6a6a7e] bg-[#bcbccc] text-[24px] text-[#646474]", width)}>
            {label}
          </button>
        )
      )}
      <div className="-mb-1 ml-auto flex self-end pr-1.5">
        <IconButton icon="tileLeft" label="Tile left" />
        <IconButton icon="tileRight" label="Tile right" />
        <IconButton icon="min" label="Minimize document" />
        <IconButton icon="restore" label="Restore document" />
        <IconButton icon="close" label="Close document" />
      </div>
    </div>
  );
}

type Node = { icon: string; label: string; box?: "+" | "-"; child?: boolean };

const tree: Node[] = [
  { icon: "sensors", label: "Sensores" },
  { icon: "annotations", label: "Anotaciones", box: "+" },
  { icon: "material", label: "Fundición gris" },
  { icon: "plane", label: "Alzado" },
  { icon: "plane", label: "Planta" },
  { icon: "plane", label: "Vista lateral" },
  { icon: "origin", label: "Origen" },
  { icon: "boss", label: "Saliente-Extruir1", box: "+" },
  { icon: "cut", label: "Cortar-Extruir2", box: "+" },
  { icon: "plane", label: "Plano2" },
  { icon: "boss", label: "Saliente-Extruir2", box: "+" },
  { icon: "axis", label: "Eje2" },
  { icon: "pattern", label: "MatrizC4" },
  { icon: "boss", label: "Saliente-Extruir4", box: "+" },
  { icon: "axis", label: "Eje4" },
  { icon: "wizard", label: "Taladro roscado 5/8-111", box: "-" },
  { icon: "sketch", label: "(-) Croquis9", child: true },
  { icon: "sketch", label: "Croquis8", child: true },
  { icon: "thread", label: "Rosca de taladro1", child: true },
  { icon: "mirror", label: "Simetría1" },
  { icon: "axis", label: "Eje5" },
  { icon: "wizard", label: "Taladro roscado 2-4.52", box: "+" },
  { icon: "fillet", label: "Redondeo1" },
  { icon: "fillet", label: "Redondeo2" },
  { icon: "fillet", label: "Redondeo3" },
  { icon: "fillet", label: "Redondeo4" },
  { icon: "fillet", label: "Redondeo5" },
  { icon: "fillet", label: "Redondeo6" },
];

// dotted connector: upper half turns towards the icon, lower half runs on to the next row
function Branch({ last }: { last: boolean }) {
  return (
    <span className="flex h-9 w-[21px] shrink-0 flex-col">
      <span className="h-[19px] border-b-2 border-l-2 border-dotted border-[#9a9aa8]" />
      {!last && <span className="flex-1 border-l-2 border-dotted border-[#9a9aa8]" />}
    </span>
  );
}

function TreeRow({ node, last }: { node: Node; last: boolean }) {
  return (
    <li className="relative flex h-9 items-center pl-[21px]">
      {node.child && <span className="h-9 w-[38px] shrink-0 border-l-2 border-dotted border-[#9a9aa8]" />}
      <Branch last={last || node.icon === "thread"} />
      {node.box && (
        <button
          aria-label={node.box === "+" ? `Expand ${node.label}` : `Collapse ${node.label}`}
          className="absolute left-[13px] flex size-[18px] items-center justify-center rounded-xs border-2 border-[#9a9aa4] bg-[#f6f6f8]"
        >
          <svg viewBox="0 0 10 10" className="size-[10px]" aria-hidden="true">
            <path d={node.box === "+" ? "M0 5H10M5 0V10" : "M0 5H10"} stroke="#404048" strokeWidth="2" />
          </svg>
        </button>
      )}
      <Icon name={node.icon} />
      <span className="ml-[11px] whitespace-nowrap">{node.label}</span>
    </li>
  );
}

const panelTabs = ["part", "manager", "config", "target", "appearance"];

function FeatureTree() {
  return (
    <aside className="flex w-[452px] shrink-0 flex-col border-r-4 border-[#6e6e84] bg-[#e4e5ec] font-['Noto_Sans',sans-serif] text-[22px] text-[#26263a]">
      <div className="h-[7px] border-b-2 border-[#8c8ca0] bg-[#c8c8d8]" />
      <div className="flex h-[52px] items-end gap-0.5 border-b-2 border-[#8c8ca0] bg-[#d2d3e4]">
        {panelTabs.map((t, i) => (
          <button
            key={t}
            aria-label={t}
            className={clsx(
              "flex h-[43px] w-[54px] items-center justify-center rounded-t-lg border-2 border-b-0 border-[#8c8ca0]",
              i === 0 ? "-mb-0.5 h-[45px] bg-[#eceef6]" : "bg-[#bebfd0]"
            )}
          >
            <Icon name={t} />
          </button>
        ))}
        <button aria-label="Show display pane" className="mr-3 ml-auto self-center text-[34px] leading-none text-[#606074]">
          »
        </button>
      </div>
      <label className="mt-1 mr-0.5 ml-0.5 flex h-9 items-center rounded-full border-2 border-[#8c8ca0] bg-linear-to-b from-[#dcdeea] to-white pl-[11px]">
        <Icon name="filter" className="size-7" />
        <input aria-label="Filter tree" className="h-full min-w-0 flex-1 outline-none" />
      </label>
      <div className="mt-[5px] overflow-hidden">
        <div className="flex h-9 items-center pl-1">
          <Icon name="part" />
          <span className="ml-[11px] whitespace-pre">PressBedDef  (Predeterminado&lt;&lt;Pred</span>
        </div>
        <ul id="tree">
          {tree.map((n, i) => (
            <TreeRow key={n.label} node={n} last={i === tree.length - 1} />
          ))}
        </ul>
      </div>
      <div className="mt-[5px] mr-0.5 h-1 bg-[#3a62b4]" />
      <div className="mt-auto mb-2 flex h-8 items-center bg-[#f0f0f2] px-[10px]" role="scrollbar" aria-controls="tree" aria-valuenow={0}>
        <svg viewBox="0 0 8 12" className="h-3 w-2" aria-hidden="true">
          <path d="M8 0V12L0 6Z" fill="#404048" />
        </svg>
        <div className="ml-4 flex h-7 w-[192px] items-center justify-center gap-1 rounded-xs border-2 border-[#9a9aa2] bg-linear-to-b from-[#f6f6f8] to-[#cfcfd6]">
          <i className="h-3 w-[2px] bg-[#707078]" />
          <i className="h-3 w-[2px] bg-[#707078]" />
          <i className="h-3 w-[2px] bg-[#707078]" />
        </div>
        <svg viewBox="0 0 8 12" className="ml-auto h-3 w-2" aria-hidden="true">
          <path d="M0 0V12L8 6Z" fill="#404048" />
        </svg>
      </div>
    </aside>
  );
}

function arc(from: number, to: number) {
  const pts: string[] = [];
  for (let a = from; a <= to; a += 7.5) {
    const r = (a * Math.PI) / 180;
    pts.push(`L${(1245 + 507 * Math.cos(r)).toFixed(1)} ${(837 - 507 * Math.sin(r)).toFixed(1)}`);
  }
  return pts.join("");
}

// the disc is faceted; front and back rims are half a facet apart
function outline(start: number) {
  return (
    "M1742 738" +
    arc(start, 180 - start) +
    "L748 738L652 780A62 62 0 0 0 652 894L748 935" +
    arc(180 + start, 360 - start) +
    "L1742 935L1838 894A62 62 0 0 0 1838 780Z"
  );
}

function Model() {
  const rims = [outline(15), outline(18.75)];
  return (
    <svg viewBox="608 325 1274 1024" className="mt-8 h-[1024px] w-[1274px] max-w-full shrink-0" fill="none" role="img" aria-label="PressBedDef, top view">
      {rims.map((d) => (
        <path key={d} d={d} stroke="#202024" strokeWidth="4.4" strokeLinejoin="round" />
      ))}
      {rims.map((d) => (
        <path key={d} d={d} fill="#828282" />
      ))}
      <circle cx="1245" cy="837" r="66" stroke="#202024" strokeWidth="2.2" strokeDasharray="8 6" />
      {[681, 1809].map((x) => (
        <g key={x}>
          <circle cx={x} cy="844" r="20" stroke="#202024" strokeWidth="3" strokeDasharray="7 6" />
          <circle cx={x} cy="844" r="17" fill="#dcdde4" stroke="#202024" strokeWidth="2" />
        </g>
      ))}
    </svg>
  );
}

function Triad() {
  return (
    <div className="absolute bottom-[2px] left-[22px] flex flex-col text-[#383858]">
      <svg viewBox="0 0 90 94" className="mb-0.5 ml-[42px] h-[94px] w-[90px]" fill="none" aria-hidden="true">
        <path d="M24 14H60" stroke="#a01c1c" strokeWidth="8" />
        <path d="M24 14H60" stroke="#f05050" strokeWidth="3" />
        <path d="M58 6 78 14 58 22Z" fill="#c01c1c" />
        <path d="M17 20V56" stroke="#20208c" strokeWidth="8" />
        <path d="M17 20V56" stroke="#6464f0" strokeWidth="3" />
        <path d="M9 55H25L17 73Z" fill="#1414a8" />
        <circle cx="17" cy="14" r="9" fill="#0c5c24" stroke="#08401a" strokeDasharray="3 2" strokeWidth="2" />
        <path d="M79 6 88 22M88 6 79 22" stroke="#e04848" strokeWidth="2" />
        <path d="M11 74H20L11 90H20" stroke="#3030b8" strokeWidth="2" />
      </svg>
      <span className="font-['DejaVu_Sans',sans-serif] text-[22px] leading-8 font-bold">*Top</span>
    </div>
  );
}

const hud: [string, string, boolean?][] = [
  ["zoomFit", "Zoom to Fit"],
  ["zoomArea", "Zoom to Area"],
  ["previous", "Previous View"],
  ["sectionView", "Section View"],
  ["orient", "View Orientation", true],
  ["display", "Display Style", true],
  ["glasses", "Hide/Show Items", true],
  ["ball", "Edit Appearance"],
  ["scene", "Apply Scene", true],
  ["monitor", "View Settings", true],
];

const taskTabs = ["home", "books", "openFolder", "palette", "ball", "props"];

function Viewport() {
  return (
    <main className="relative flex min-w-0 flex-1 flex-col items-center bg-linear-to-b from-[#c6c7d4] via-[#c4c7d3] to-[#c9cad5] pt-[14px] pr-[10px]">
      <div className="flex h-8 items-center pl-5">
        {hud.map(([icon, label, menu]) => (
          <button key={icon} aria-label={label} className={clsx("flex items-center", menu ? "w-[66px] gap-2" : "w-[46px]")}>
            <Icon name={icon} />
            {menu && <Caret className="text-[#585870]" />}
          </button>
        ))}
      </div>
      <Model />
      <Triad />
      <button
        aria-label="Collapse panel"
        className="absolute top-[561px] -left-1 flex h-[57px] w-[19px] flex-col items-center justify-around rounded-r-md border-2 border-l-0 border-[#6e6e84] bg-[#e6e7ef] py-1"
      >
        {[0, 1, 2].map((i) => (
          <svg key={i} viewBox="0 0 8 10" className="h-[10px] w-2" aria-hidden="true">
            <path d="M8 0V10L0 5Z" fill="#505064" />
          </svg>
        ))}
      </button>
      <div className="absolute top-[81px] right-0 flex flex-col gap-0.5">
        {taskTabs.map((t, i) => (
          <button
            key={t}
            aria-label={t}
            className={clsx(
              "flex h-[46px] w-[42px] items-center rounded-l-lg border-2 border-r-0 border-[#84849a] pl-1.5",
              i === 0 ? "bg-[#f2f2f8]" : "bg-[#c0c2d0]"
            )}
          >
            <Icon name={t} />
          </button>
        ))}
      </div>
    </main>
  );
}

function ModelTabs() {
  const nav = ["M14 3V19L5 11ZM3 3V19", "M15 3V19L6 11Z", "M7 3V19L16 11Z", "M7 3V19L16 11ZM18 3V19"];
  return (
    <div className="flex h-8 shrink-0 items-start border-t-2 border-b-2 border-t-[#1c1c24] border-b-[#5c5c70] bg-[#e0e3e9] font-['Liberation_Sans',sans-serif]">
      <div className="flex h-7 w-[138px] gap-0.5 bg-[#b4b6c4] pl-1">
        {nav.map((d) => (
          <button key={d} aria-label="Scroll tabs" className="h-7 w-[31px] border-2 border-[#9496a8] bg-[#b0b2c2] pl-0.5">
            <svg viewBox="0 0 22 22" className="size-[22px]" aria-hidden="true">
              <path d={d} fill="#8c8ea2" stroke="#8c8ea2" strokeWidth="2" />
            </svg>
          </button>
        ))}
      </div>
      <button className="h-7 w-[110px] border-x-2 border-b-2 border-[#5c5c70] bg-[#e0e3ec] text-[23px] leading-[22px] font-bold text-[#282830]">Model</button>
      <button className="h-[26px] w-[316px] border-r-3 border-b-3 border-[#5c5c70] bg-[#bebfce] pl-[14px] text-left text-[25px] leading-[22px] text-[#303040]">
        Estudio de movimiento 1
      </button>
    </div>
  );
}

function StatusBar() {
  return (
    <footer className="flex h-9 shrink-0 items-center bg-linear-to-b from-[#cfd0e0] via-[#c8c9dc] to-[#a4b6c8] pl-1 font-['Noto_Sans',sans-serif] text-[23px] text-[#26263a]">
      <span>Saves the active document.</span>
      <span className="ml-auto w-[165px] border-x-2 border-[#dcdcea] px-1.5 leading-8 whitespace-nowrap">Editing Part</span>
      <span className="ml-[71px]">IPS</span>
      <span className="ml-9 rotate-180">
        <Caret />
      </span>
      <span className="ml-[31px]">
        <Icon name="quickHelp" />
      </span>
      <button aria-label="Tags" className="mr-1.5 ml-[97px]">
        <Icon name="tag" />
      </button>
    </footer>
  );
}

export default function App() {
  return (
    <div className="flex min-h-screen flex-col overflow-hidden bg-[#c6c7d4] font-['DejaVu_Sans_Condensed','DejaVu_Sans',sans-serif]">
      <Defs />
      <TitleBar />
      <Ribbon />
      <CommandTabs />
      <div className="flex flex-1">
        <FeatureTree />
        <Viewport />
      </div>
      <ModelTabs />
      <StatusBar />
    </div>
  );
}
